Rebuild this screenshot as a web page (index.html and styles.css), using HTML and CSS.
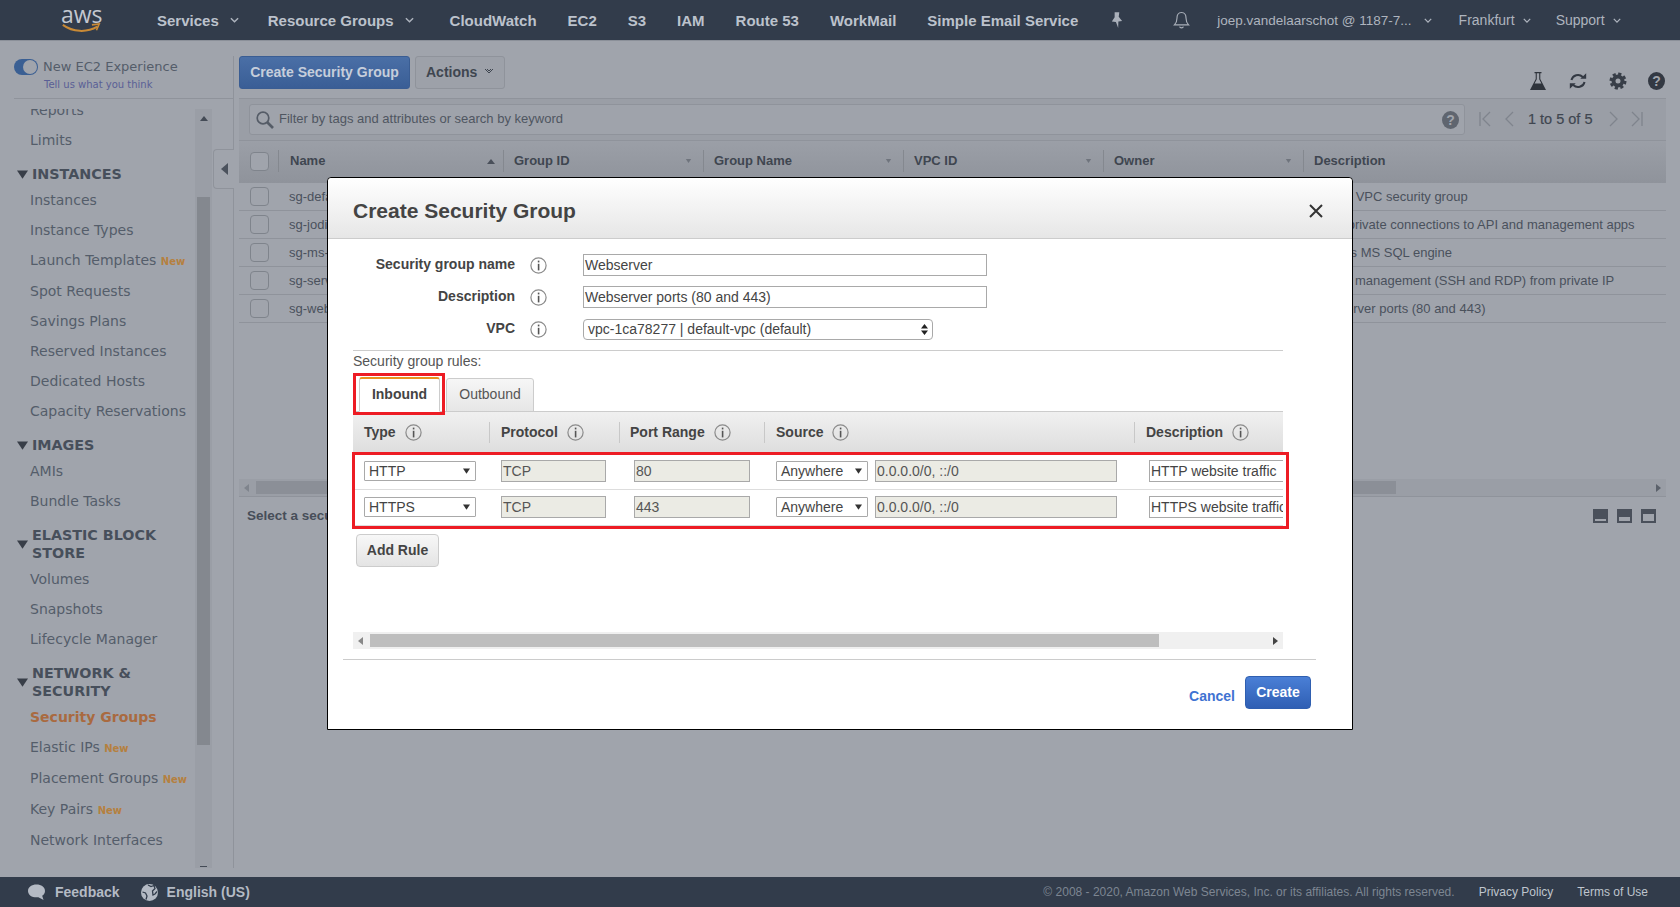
FILE: index.html
```html
<!DOCTYPE html>
<html lang="en">
<head>
<meta charset="utf-8">
<title>Create Security Group</title>
<link rel="stylesheet" href="styles.css">
</head>
<body>
<svg class="defs" width="0" height="0" aria-hidden="true">
  <defs>
    <symbol id="info" viewBox="0 0 17 17"><circle cx="8.5" cy="8.5" r="7.6" fill="none" stroke="#8a8a8a" stroke-width="1.2"/><rect x="7.8" y="3.6" width="1.6" height="1.8" fill="#555"/><rect x="7.8" y="6.8" width="1.6" height="6.6" fill="#555"/></symbol>
    <symbol id="chev" viewBox="0 0 10 6"><path d="M1 1l4 4 4-4" fill="none" stroke="currentColor" stroke-width="1.6"/></symbol>
    <symbol id="tri" viewBox="0 0 8 6"><path d="M0 0h8L4 6z" fill="currentColor"/></symbol>
  </defs>
</svg>
<div class="app">
  <header class="topbar">
    <div class="logo">
      <span class="logo-text">aws</span>
      <svg class="logo-smile" viewBox="0 0 42 11"><path d="M1 2c11 8 26 9 38 2" fill="none" stroke="#c98a36" stroke-width="2.2"/><path d="M33 2l8-1-3 7" fill="none" stroke="#c98a36" stroke-width="1.8"/></svg>
    </div>
    <nav class="topnav">
      <span class="tn-item tn-services">Services<svg class="tn-chev first"><use href="#chev"/></svg></span>
      <span class="tn-item tn-groups">Resource Groups<svg class="tn-chev first"><use href="#chev"/></svg></span>
      <span class="tn-item">CloudWatch</span>
      <span class="tn-item">EC2</span>
      <span class="tn-item">S3</span>
      <span class="tn-item">IAM</span>
      <span class="tn-item">Route 53</span>
      <span class="tn-item">WorkMail</span>
      <span class="tn-item">Simple Email Service</span>
    </nav>
    <svg class="pin" viewBox="0 0 14 18"><path d="M5 0h5l-.6 5 3.600 4.500-4 .7L8.800 17 6.400 10.600 2 10.200l3-4.700z" fill="#aab0ba"/></svg>
    <svg class="bell" viewBox="0 0 18 20"><path d="M9 1.500c-3.600 0-4.800 3-4.800 6 0 3.400-1 5.500-2.700 7.200h15c-1.700-1.700-2.700-3.800-2.700-7.200 0-3-1.200-6-4.800-6zM7 16.500c.4 1.700 3.600 1.700 4 0" fill="none" stroke="#aab0ba" stroke-width="1.2"/></svg>
    <span class="tr-item user">joep.vandelaarschot @ 1187-7...<svg class="tn-chev"><use href="#chev"/></svg></span>
    <span class="tr-item region">Frankfurt<svg class="tn-chev"><use href="#chev"/></svg></span>
    <span class="tr-item">Support<svg class="tn-chev"><use href="#chev"/></svg></span>
  </header>

  <div class="content">
    <aside class="sidebar">
      <div class="exp">
        <span class="toggle"><span class="knob"></span></span>
        <div class="exp-text">
          <div class="exp-title">New EC2 Experience</div>
          <div class="exp-link">Tell us what you think</div>
        </div>
      </div>
      <div class="sb-scroll">
        <div class="sb-clip">
          <ul class="sb-list">
            <li class="sb-item">Reports</li>
            <li class="sb-item">Limits</li>
            <li class="sb-head"><svg class="sb-tri"><use href="#tri"/></svg><span>INSTANCES</span></li>
            <li class="sb-item">Instances</li>
            <li class="sb-item">Instance Types</li>
            <li class="sb-item tall">Launch Templates <b class="new">New</b></li>
            <li class="sb-item">Spot Requests</li>
            <li class="sb-item">Savings Plans</li>
            <li class="sb-item">Reserved Instances</li>
            <li class="sb-item">Dedicated Hosts</li>
            <li class="sb-item">Capacity Reservations</li>
            <li class="sb-head"><svg class="sb-tri"><use href="#tri"/></svg><span>IMAGES</span></li>
            <li class="sb-item">AMIs</li>
            <li class="sb-item">Bundle Tasks</li>
            <li class="sb-head"><svg class="sb-tri"><use href="#tri"/></svg><span>ELASTIC BLOCK<br>STORE</span></li>
            <li class="sb-item">Volumes</li>
            <li class="sb-item">Snapshots</li>
            <li class="sb-item">Lifecycle Manager</li>
            <li class="sb-head"><svg class="sb-tri"><use href="#tri"/></svg><span>NETWORK &amp;<br>SECURITY</span></li>
            <li class="sb-item active">Security Groups</li>
            <li class="sb-item tall">Elastic IPs <b class="new">New</b></li>
            <li class="sb-item tall">Placement Groups <b class="new">New</b></li>
            <li class="sb-item tall">Key Pairs <b class="new">New</b></li>
            <li class="sb-item">Network Interfaces</li>
          </ul>
        </div>
        <div class="sb-bar">
          <svg class="sb-up" viewBox="0 0 8 5"><path d="M4 0l4 5H0z" fill="#444b56"/></svg>
          <div class="sb-thumb"></div>
          <div class="sb-down"></div>
        </div>
      </div>
      <div class="handle"><svg viewBox="0 0 7 12"><path d="M7 0v12L0 6z" fill="#4b525d"/></svg></div>
    </aside>

    <main class="main">
      <div class="toolbar">
        <button class="btn-primary">Create Security Group</button>
        <button class="btn-actions">Actions<svg class="act-chev" viewBox="0 0 10 7"><path d="M1 1l4 4 4-4M3 1l2 2 2-2" fill="none" stroke="#3f4650" stroke-width="1"/></svg></button>
        <div class="tool-icons">
          <svg class="ti" viewBox="0 0 20 20"><path d="M6.500 1h7v1.300h-1.200v5.700l5.700 11H2l5.700-11V2.300H6.500z" fill="#2f343c"/><path d="M8.800 2.300v5.900L6.600 12.500h6.800l-2.200-4.300V2.300z" fill="#a0a4ac"/></svg>
          <svg class="ti" viewBox="0 0 22 20"><path d="M3.800 9a7.300 7.300 0 0 1 12.400-3.400M18.200 11a7.300 7.300 0 0 1-12.400 3.400" fill="none" stroke="#333943" stroke-width="2.200"/><path d="M13.500 7.500h6.500V1.500zM8.500 12.500H2v6z" fill="#333943"/></svg>
          <svg class="ti" viewBox="0 0 20 20"><circle cx="10" cy="10" r="4.500" fill="none" stroke="#383e48" stroke-width="4"/><circle cx="10" cy="10" r="7.200" fill="none" stroke="#383e48" stroke-width="2.600" stroke-dasharray="3.200 2.450"/></svg>
          <span class="help-dark">?</span>
        </div>
      </div>
      <div class="filterbar">
        <div class="filter">
          <svg class="mag" viewBox="0 0 18 18"><circle cx="7" cy="7" r="5.800" fill="none" stroke="#555c67" stroke-width="1.700"/><path d="M11 11l6 6" stroke="#555c67" stroke-width="2.600"/></svg>
          <span class="filter-text">Filter by tags and attributes or search by keyword</span>
          <span class="help-grey">?</span>
        </div>
        <div class="pager">
          <svg class="pg" viewBox="0 0 12 16"><path d="M1 1v14M11 1L4 8l7 7" fill="none" stroke="#7f848d" stroke-width="1.300"/></svg>
          <svg class="pg" viewBox="0 0 12 16"><path d="M10 1L3 8l7 7" fill="none" stroke="#7f848d" stroke-width="1.300"/></svg>
          <span class="pg-text">1 to 5 of 5</span>
          <svg class="pg" viewBox="0 0 12 16"><path d="M2 1l7 7-7 7" fill="none" stroke="#7f848d" stroke-width="1.300"/></svg>
          <svg class="pg" viewBox="0 0 12 16"><path d="M1 1l7 7-7 7M11 1v14" fill="none" stroke="#7f848d" stroke-width="1.300"/></svg>
        </div>
      </div>
      <div class="panel">
        <div class="thead">
          <div class="th th-check"><span class="check"></span></div>
          <div class="th th-name">Name<svg class="sort up" viewBox="0 0 8 5"><path d="M4 0l4 5H0z"/></svg></div>
          <div class="th">Group ID<svg class="sort"><use href="#tri"/></svg></div>
          <div class="th">Group Name<svg class="sort"><use href="#tri"/></svg></div>
          <div class="th">VPC ID<svg class="sort"><use href="#tri"/></svg></div>
          <div class="th">Owner<svg class="sort"><use href="#tri"/></svg></div>
          <div class="th">Description</div>
        </div>
        <div class="tr"><div class="td td-check"><span class="check"></span></div><div class="td td-name">sg-default</div><div class="td td-desc">default VPC security group</div></div>
        <div class="tr"><div class="td td-check"><span class="check"></span></div><div class="td td-name">sg-jodi</div><div class="td td-desc">Allow private connections to API and management apps</div></div>
        <div class="tr"><div class="td td-check"><span class="check"></span></div><div class="td td-name">sg-ms-sql</div><div class="td td-desc">Permits MS SQL engine</div></div>
        <div class="tr"><div class="td td-check"><span class="check"></span></div><div class="td td-name">sg-server</div><div class="td td-desc">Server management (SSH and RDP) from private IP</div></div>
        <div class="tr"><div class="td td-check"><span class="check"></span></div><div class="td td-name">sg-webserver</div><div class="td td-desc">Webserver ports (80 and 443)</div></div>
        <div class="hscroll">
          <svg class="hs-arrow" viewBox="0 0 5 8"><path d="M5 0v8L0 4z" fill="#7f848d"/></svg>
          <div class="hs-thumb"></div>
          <svg class="hs-arrow" viewBox="0 0 5 8"><path d="M0 0v8l5-4z" fill="#5b616b"/></svg>
        </div>
      </div>
      <div class="status">
        <span class="status-text">Select a security group above</span>
        <div class="layouts">
          <span class="lay lay1"></span>
          <span class="lay lay2"></span>
          <span class="lay lay3"></span>
        </div>
      </div>
    </main>
  </div>

  <footer class="footer">
    <svg class="f-ico" viewBox="0 0 18 17"><path d="M9 0c5 0 9 2.800 9 6.800 0 2.300-1.200 4-3 5.200l1.500 4.500L11 13.500c-.7.100-1.300.1-2 .1-5 0-9-2.800-9-6.800S4 0 9 0z" fill="#b4bac4"/></svg>
    <span class="f-link fb">Feedback</span>
    <svg class="f-ico" viewBox="0 0 17 17"><circle cx="8.500" cy="8.500" r="8.500" fill="#b4bac4"/><path d="M7 1l3 1.500 3-1 1 3-2.500 2.500L12 11l2-1 2-2.500M1.500 8l3 1 1.500 3-1 3.500" fill="none" stroke="#323c4b" stroke-width="1.300"/></svg>
    <span class="f-link">English (US)</span>
    <span class="copy">© 2008 - 2020, Amazon Web Services, Inc. or its affiliates. All rights reserved.</span>
    <span class="f-right">Privacy Policy</span>
    <span class="f-right">Terms of Use</span>
  </footer>

  <section class="modal">
    <div class="m-head">
      <h1 class="m-title">Create Security Group</h1>
      <svg class="m-close" viewBox="0 0 14 14"><path d="M1 1l12 12M13 1L1 13" stroke="#333" stroke-width="2"/></svg>
    </div>
    <div class="m-body">
      <div class="form">
        <div class="f-row"><label class="f-label">Security group name</label><svg class="info f-info"><use href="#info"/></svg><div class="field wide">Webserver</div></div>
        <div class="f-row"><label class="f-label">Description</label><svg class="info f-info"><use href="#info"/></svg><div class="field wide">Webserver ports (80 and 443)</div></div>
        <div class="f-row"><label class="f-label">VPC</label><svg class="info f-info"><use href="#info"/></svg><div class="vpc">vpc-1ca78277 | default-vpc (default)<svg class="updown" viewBox="0 0 7 11"><path d="M3.500 0L7 4.500H0zM3.500 11L0 6.500h7z" fill="#222"/></svg></div></div>
      </div>
      <div class="rules-title">Security group rules:</div>
      <div class="tabs">
        <div class="tab on">Inbound</div>
        <div class="tab">Outbound</div>
      </div>
      <div class="r-head">
        <div class="r-th">Type<svg class="info r-info"><use href="#info"/></svg></div>
        <div class="r-th">Protocol<svg class="info r-info"><use href="#info"/></svg></div>
        <div class="r-th r-port">Port Range<svg class="info r-info"><use href="#info"/></svg></div>
        <div class="r-th">Source<svg class="info r-info"><use href="#info"/></svg></div>
        <div class="r-th">Description<svg class="info r-info"><use href="#info"/></svg></div>
      </div>
      <div class="r-rows">
        <div class="r-row">
          <div class="r-td"><div class="sel sel-type">HTTP<svg class="sel-tri"><use href="#tri"/></svg></div></div>
          <div class="r-td pad-proto"><div class="ro w-proto">TCP</div></div>
          <div class="r-td pad-port"><div class="ro w-port">80</div></div>
          <div class="r-td"><div class="sel sel-src">Anywhere<svg class="sel-tri"><use href="#tri"/></svg></div><div class="ro w-cidr">0.0.0.0/0, ::/0</div></div>
          <div class="r-td pad-desc"><div class="field w-desc">HTTP website traffic</div></div>
        </div>
        <div class="r-row">
          <div class="r-td"><div class="sel sel-type">HTTPS<svg class="sel-tri"><use href="#tri"/></svg></div></div>
          <div class="r-td pad-proto"><div class="ro w-proto">TCP</div></div>
          <div class="r-td pad-port"><div class="ro w-port">443</div></div>
          <div class="r-td"><div class="sel sel-src">Anywhere<svg class="sel-tri"><use href="#tri"/></svg></div><div class="ro w-cidr">0.0.0.0/0, ::/0</div></div>
          <div class="r-td pad-desc"><div class="field w-desc">HTTPS website traffic</div></div>
        </div>
      </div>
      <button class="btn-add">Add Rule</button>
      <div class="m-scroll">
        <svg class="hs-arrow" viewBox="0 0 5 8"><path d="M5 0v8L0 4z" fill="#888"/></svg>
        <div class="m-thumb"></div>
        <svg class="hs-arrow" viewBox="0 0 5 8"><path d="M0 0v8l5-4z" fill="#444"/></svg>
      </div>
    </div>
    <div class="m-foot">
      <a class="cancel">Cancel</a>
      <button class="btn-create">Create</button>
    </div>
    <div class="mark mark-tab"></div>
    <div class="mark mark-rows"></div>
  </section>
</div>
</body>
</html>
```

FILE: styles.css
```css
* { box-sizing: border-box; }
html, body { margin: 0; padding: 0; }
body { width: 1680px; height: 907px; overflow: hidden; font-family: "Liberation Sans", Arial, sans-serif; background: #a0a4ac; color: #444; }
.defs { position: absolute; }
ul { list-style: none; margin: 0; padding: 0; }
button { font-family: inherit; cursor: default; }
.app { position: relative; width: 1680px; height: 907px; display: flex; flex-direction: column; }

/* top bar */
.topbar { height: 41px; flex: none; display: flex; align-items: center; background: #323c4b; border-bottom: 1px solid #8b9099; color: #b9bfc9; }
.logo { width: 42px; margin-left: 60px; height: 26px; position: relative; flex: none; }
.logo-text { position: absolute; left: 1px; top: -8px; font: 23px/30px "Open Sans", sans-serif; color: #c3c8d0; }
.logo-smile { position: absolute; left: 0; bottom: 0; width: 42px; height: 10px; }
.topnav { display: flex; margin-left: 55px; gap: 31px; font-weight: 700; font-size: 15px; color: #bcc2cc; }
.tn-item { display: flex; align-items: center; white-space: nowrap; }
.tn-services { margin-right: -2px; }
.tn-groups { margin-right: 5px; }
.tn-chev { width: 8px; height: 5px; margin-left: 8px; color: #aeb4be; }
.tn-chev.first { width: 9px; height: 6px; margin-left: 11px; }
.pin { width: 13px; height: 17px; margin-left: 32px; }
.bell { width: 17px; height: 19px; margin-left: 50px; }
.tr-item { display: flex; align-items: center; font-size: 14px; color: #aeb4be; white-space: nowrap; }
.user { margin-left: 27px; font-size: 13.500px; }
.user .tn-chev { margin-left: 12px; }
.region { margin-left: 27px; }
.tr-item.region + .tr-item { margin-left: 25px; }

/* layout */
.content { flex: 1; min-height: 0; display: flex; }
.sidebar { position: relative; width: 234px; flex: none; margin-top: 15px; margin-bottom: 9px; border-right: 1px solid #8f939b; display: flex; flex-direction: column; }
.exp { height: 43px; flex: none; margin-left: 14px; border-bottom: 1px solid #8f939b; display: flex; padding-top: 3px; }
.toggle { width: 24px; height: 16px; border-radius: 8px; background: #3a5f93; position: relative; flex: none; }
.knob { position: absolute; right: 1px; top: 1px; width: 14px; height: 14px; border-radius: 50%; background: #a0a4ac; }
.exp-text { margin-left: 5px; font-family: "DejaVu Sans", sans-serif; }
.exp-title { font-size: 13px; line-height: 15px; color: #545d6a; }
.exp-link { font-size: 10px; line-height: 12px; margin-top: 5px; padding-left: 1px; color: #5a5f96; }
.sb-scroll { flex: 1; min-height: 0; display: flex; margin-top: 10px; }
.sb-clip { width: 195px; flex: none; overflow: hidden; }
.sb-list { margin-top: -14px; font-family: "DejaVu Sans", sans-serif; font-size: 14px; color: #545d6a; }
.sb-item { height: 30px; line-height: 30px; padding-left: 30px; white-space: nowrap; }
.sb-item.tall { height: 31px; line-height: 31px; }
.sb-item.active { color: #a96a40; font-weight: 700; }
.new { font-size: 10px; color: #b5803f; }
.sb-head { display: flex; align-items: center; margin-top: 10px; padding: 0 0 2px 17px; font-weight: 700; font-size: 14.300px; line-height: 18px; color: #474f5b; }
.sb-tri { width: 11px; height: 9px; color: #383e48; margin-right: 4px; flex: none; }
.sb-bar { width: 17px; flex: none; background: #9a9ea6; display: flex; flex-direction: column; align-items: center; }
.sb-up { width: 8px; height: 5px; margin-top: 7px; flex: none; }
.sb-thumb { width: 13px; height: 548px; margin-top: 76px; background: #84888f; flex: none; }
.sb-down { width: 7px; height: 1px; margin-top: auto; margin-bottom: 1px; background: #444b56; }
.handle { position: absolute; left: 213px; top: 93px; width: 21px; height: 40px; border: 1px solid #8f939b; border-right: 0; border-radius: 4px 0 0 4px; background: #a0a4ac; display: flex; align-items: center; justify-content: center; }
.handle svg { width: 7px; height: 12px; }

.main { flex: 1; min-width: 0; padding: 15px 14px 0 5px; display: flex; flex-direction: column; }
.toolbar { height: 43px; flex: none; display: flex; align-items: flex-start; border-bottom: 1px solid #8f939b; }
.btn-primary { height: 33px; width: 171px; padding: 0 0 1px; border: 1px solid #3a5d93; border-radius: 3px; background: linear-gradient(#4a6fa6, #3a5e96); color: #c6cedb; font-weight: 700; font-size: 14px; }
.btn-actions { height: 33px; width: 90px; margin-left: 5px; padding: 0 0 2px 10px; border: 1px solid #8f939b; border-radius: 3px; background: #9da1a9; color: #3f4650; font-weight: 700; font-size: 14px; display: flex; align-items: center; }
.act-chev { width: 10px; height: 7px; margin-left: 7px; }
.tool-icons { margin-left: auto; display: flex; align-items: center; gap: 20px; padding-top: 15px; margin-right: 1px; }
.ti { width: 20px; height: 20px; }
.help-dark { width: 17px; height: 18px; border-radius: 50%; background: #333943; color: #a0a4ac; font-weight: 700; font-size: 14px; line-height: 18px; text-align: center; }

.filterbar { height: 42px; flex: none; display: flex; align-items: center; padding: 0 0 0 10px; background: #9a9ea6; border-bottom: 1px solid #8f939b; }
.filter { width: 1216px; height: 31px; flex: none; display: flex; align-items: center; padding: 0 5px 0 6px; background: #9fa3ab; border: 1px solid #8f939b; border-radius: 3px; }
.mag { width: 18px; height: 18px; }
.filter-text { margin: 0 0 2px 5px; font-size: 13px; color: #4f5661; }
.help-grey { margin-left: auto; width: 17px; height: 18px; border-radius: 50%; background: #5f656f; color: #a0a4ac; font-weight: 700; font-size: 14px; line-height: 18px; text-align: center; }
.pager { display: flex; align-items: center; margin-left: 14px; padding-bottom: 2px; }
.pg { width: 12px; height: 16px; margin-right: 12px; }
.pg:last-child { margin-left: -1px; }
.pg-text { font-size: 14.500px; color: #3f4650; font-weight: 400; margin: 0 15px 0 1px; -webkit-text-stroke: .2px #3f4650; }

.panel { height: 356px; flex: none; display: flex; flex-direction: column; }
.thead { height: 42px; flex: none; padding-bottom: 2px; display: grid; grid-template-columns: 39px 225px 200px 200px 200px 200px 1fr; align-items: center; background: linear-gradient(#9b9fa7, #8f939b); font-size: 13px; font-weight: 700; color: #3f4650; }
.th { height: 22px; line-height: 22px; padding: 0 11px 0 10px; border-left: 1px solid #84888f; display: flex; justify-content: space-between; align-items: center; }
.th-check { border-left: 0; padding: 0 0 0 11px; }
.th-name { padding: 0 8px 0 11px; }
.sort { width: 7px; height: 4px; color: #6f747d; fill: #4a505a; }
.sort.up { width: 8px; height: 5px; }
.check { display: block; width: 19px; height: 19px; border: 1px solid #7f848c; border-radius: 4px; background: #a0a4ac; }
.tr { height: 28px; flex: none; display: grid; grid-template-columns: 50px 1025px 1fr; align-items: center; border-bottom: 1px solid #8f939b; font-size: 13px; color: #4a515c; }
.td-check { padding-left: 11px; }
.td-desc { white-space: nowrap; margin-left: -1px; }
.hscroll { margin-top: auto; height: 18px; flex: none; display: flex; align-items: center; background: #9a9ea6; border-bottom: 1px solid #8f939b; padding: 0 5px; }
.hs-arrow { width: 5px; height: 8px; flex: none; }
.hs-thumb { width: 1140px; height: 13px; margin-left: 7px; margin-right: auto; background: #8b8f97; }
.status { flex: none; display: flex; height: 38px; align-items: center; padding: 0 10px 0 8px; }
.status-text { font-size: 13.500px; font-weight: 700; color: #474e59; margin-bottom: 1px; }
.layouts { margin-left: auto; display: flex; gap: 9px; margin-top: 0; }
.lay { width: 15px; height: 14px; background: #4a505b; position: relative; display: block; }
.lay::after { content: ""; position: absolute; background: #a0a4ac; left: 2px; right: 2px; }
.lay1::after { bottom: 2px; height: 2px; }
.lay2::after { bottom: 2px; height: 4px; }
.lay3::after { bottom: 2px; top: 5px; }

/* footer */
.footer { height: 30px; flex: none; display: flex; align-items: center; background: #323c4b; padding: 0 32px 0 28px; }
.f-ico { width: 17px; height: 17px; flex: none; }
.f-link { font-size: 14px; font-weight: 700; color: #b4bac4; margin-left: 9px; }
.fb { margin-left: 10px; margin-right: 21px; }
.copy { margin-left: auto; font-size: 12px; color: #7d8692; }
.f-right { font-size: 12px; color: #bfc5cd; margin-left: 24px; }

/* modal */
.modal { position: absolute; left: 327px; top: 177px; width: 1026px; height: 553px; background: #fff; border: 1px solid #000; border-radius: 4px 4px 0 0; }
.m-head { height: 61px; display: flex; align-items: center; justify-content: space-between; padding: 5px 29px 0 25px; background: linear-gradient(#fff, #e6e6e6); border-bottom: 1px solid #ccc; border-radius: 4px 4px 0 0; }
.m-title { margin: 0; font-size: 21px; font-weight: 700; color: #444; }
.m-close { width: 14px; height: 14px; }
.m-body { margin-left: 25px; width: 930px; }
.form { padding-top: 15px; padding-bottom: 10px; border-bottom: 1px solid #ccc; display: flex; flex-direction: column; gap: 10px; }
.f-row { display: flex; align-items: center; height: 22px; }
.f-label { width: 162px; text-align: right; font-size: 14px; line-height: 20px; margin-bottom: 2px; font-weight: 700; color: #444; flex: none; }
.info { width: 17px; height: 17px; flex: none; }
.f-info { margin-left: 15px; }
.field { height: 22px; border: 1px solid #a9a9a9; background: #fff; font-size: 14px; line-height: 20px; padding-left: 1px; color: #444; white-space: nowrap; overflow: hidden; }
.wide { width: 404px; margin-left: 36px; }
.vpc { position: relative; width: 350px; height: 21px; margin-left: 36px; border: 1px solid #a9a9a9; border-radius: 4px; font-size: 14px; line-height: 19px; padding-left: 4px; color: #444; }
.updown { position: absolute; right: 4px; top: 4px; width: 7px; height: 11px; }
.rules-title { font-size: 14px; line-height: 20px; color: #555; }
.tabs { display: flex; margin-top: 6px; height: 35px; padding-left: 6px; gap: 6px; border-bottom: 1px solid #ccc; align-items: flex-end; }
.tab { width: 88px; height: 34px; margin-bottom: -1px; border: 1px solid #ccc; border-radius: 3px 3px 0 0; background: linear-gradient(#f6f6f6, #e6e6e6); font-size: 14px; line-height: 30px; text-align: center; color: #555; }
.tab.on { width: 81px; height: 35px; border-top: 2px solid #e8921f; border-bottom: 1px solid #fff; background: #fff; font-weight: 700; color: #444; }
.r-head { height: 40px; display: grid; grid-template-columns: 136px 130px 145px 370px 149px; align-items: center; background: linear-gradient(#f0f0f0, #dedede); }
.r-th { height: 21px; display: flex; align-items: center; padding-left: 11px; border-left: 1px solid #c8c8c8; font-size: 14px; font-weight: 700; color: #444; }
.r-th:first-child { border-left: 0; }
.r-th.r-port { padding-left: 10px; }
.r-info { margin-left: 9px; }
.r-rows { margin-top: 1px; overflow: hidden; }
.r-row { height: 37px; display: grid; grid-template-columns: 136px 130px 146px 371px 147px; border-bottom: 1px solid #ddd; align-items: center; overflow: hidden; }
.r-row + .r-row { height: 36px; padding-bottom: 1px; }
.r-td { display: flex; align-items: center; padding-left: 11px; gap: 7px; min-width: 0; }
.pad-proto { padding-left: 12px; }
.pad-port { padding-left: 15px; }
.pad-desc { padding-left: 13px; overflow: hidden; }
.sel { position: relative; height: 20px; border: 1px solid #a9a9a9; background: #fff; border-radius: 1px; font-size: 14px; line-height: 18px; color: #444; padding-left: 4px; flex: none; }
.sel-type { width: 112px; }
.sel-src { width: 92px; }
.sel-tri { position: absolute; right: 5px; top: 6px; width: 7px; height: 6px; color: #333; }
.ro { height: 22px; border: 1px solid #a9a9a9; background: #ebebe4; font-size: 14px; line-height: 20px; padding-left: 1px; color: #555; flex: none; white-space: nowrap; }
.w-proto { width: 105px; }
.w-port { width: 116px; }
.w-cidr { width: 242px; }
.w-desc { width: 140px; flex: none; }
.btn-add { display: block; width: 83px; height: 33px; margin: 8px 0 0 3px; padding: 0 0 1px; border: 1px solid #ccc; border-radius: 4px; background: linear-gradient(#f7f7f7, #e4e4e4); font-size: 14px; font-weight: 700; color: #444; }
.m-scroll { height: 17px; margin-top: 65px; display: flex; align-items: center; background: #f0f0f0; padding: 0 5px; }
.m-thumb { width: 789px; height: 13px; margin-left: 7px; margin-right: auto; background: #bebebe; }
.m-foot { margin: 10px 36px 0 15px; padding: 16px 5px 0 0; border-top: 1px solid #ccc; display: flex; justify-content: flex-end; gap: 10px; }
.cancel { align-self: flex-end; font-size: 14px; font-weight: 700; line-height: 26px; color: #3f73d2; }
.btn-create { width: 66px; height: 33px; padding: 0 0 2px; border: 1px solid #2f5fb0; border-radius: 4px; background: linear-gradient(#4a7fd6, #2f5fb4); color: #fff; font-size: 14px; font-weight: 700; }
.mark { position: absolute; border: 3px solid #ed1c24; pointer-events: none; }
.mark-tab { left: 25px; top: 195px; width: 92px; height: 42px; }
.mark-rows { left: 24px; top: 274px; width: 937px; height: 77px; }
```
